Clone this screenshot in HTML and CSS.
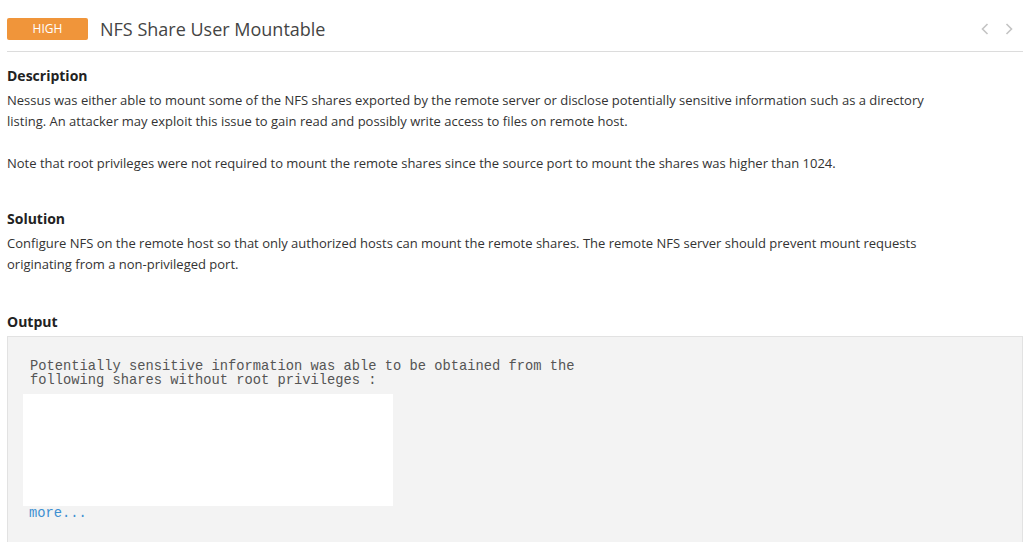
FILE: index.html
```html
<!DOCTYPE html>
<html>
<head>
<meta charset="utf-8">
<link rel="stylesheet" href="styles.css">
</head>
<body>
<div class="page">
  <header class="header">
    <span class="badge">HIGH</span>
    <h1 class="title">NFS Share User Mountable</h1>
    <div class="nav">
      <svg class="chev" width="10" height="14" viewBox="0 0 10 14"><path d="M7.5 2 L2.5 7 L7.5 12" fill="none" stroke="#c4c4c4" stroke-width="1.6"/></svg>
      <svg class="chev" width="10" height="14" viewBox="0 0 10 14"><path d="M2.5 2 L7.5 7 L2.5 12" fill="none" stroke="#c4c4c4" stroke-width="1.6"/></svg>
    </div>
  </header>

  <section class="section">
    <h2 class="heading">Description</h2>
    <p class="text">Nessus was either able to mount some of the NFS shares exported by the remote server or disclose potentially sensitive information such as a directory listing. An attacker may exploit this issue to gain read and possibly write access to files on remote host.</p>
    <p class="text gap">Note that root privileges were not required to mount the remote shares since the source port to mount the shares was higher than 1024.</p>
  </section>

  <section class="section">
    <h2 class="heading">Solution</h2>
    <p class="text">Configure NFS on the remote host so that only authorized hosts can mount the remote shares. The remote NFS server should prevent mount requests originating from a non-privileged port.</p>
  </section>

  <section class="section">
    <h2 class="heading">Output</h2>
    <div class="output">
      <pre class="mono">Potentially sensitive information was able to be obtained from the
following shares without root privileges :</pre>
      <div class="redacted"></div>
      <a class="more" href="#">more...</a>
    </div>
  </section>
</div>
</body>
</html>
```

FILE: styles.css
```css
* { box-sizing: border-box; }
html, body { margin: 0; padding: 0; background: #fff; }
body { font-family: "Open Sans", "Noto Sans", sans-serif; color: #333; }
.page { padding: 0 1px 0 7px; overflow: hidden; height: 542px; }
.header {
  display: flex; align-items: center;
  height: 52px; padding-top: 6px;
  border-bottom: 1px solid #dcdcdc;
}
.badge {
  width: 81px; height: 22px; line-height: 22px;
  background: #f0953a; color: #fff; border-radius: 2px;
  font-size: 12px; text-align: center;
}
.title {
  margin: 0 0 0 12px; font-weight: 400; font-size: 18px; color: #444;
  flex: 1;
}
.nav { display: flex; gap: 14px; padding-right: 9px; }
.chev { display: block; }
.heading {
  margin: 0 0 2px; font-size: 14px; font-weight: 700; color: #222;
  line-height: 24px;
}
.text { margin: 0; font-size: 13px; line-height: 21px; max-width: 930px; }
.text.gap { margin-top: 21px; }
.section:nth-of-type(1) { padding-top: 12px; }
.section:nth-of-type(2) { padding-top: 33px; }
.section:nth-of-type(3) { padding-top: 35px; }
.output {
  margin-top: 1px; background: #f3f3f3;
  border-top: 1px solid #e2e2e2; border-left: 1px solid #e2e2e2; border-right: 1px solid #e2e2e2;
  padding: 23px 0 30px 15px; height: 220px;
}
.mono {
  margin: 0 0 0 7px; font-family: "Liberation Mono", monospace; font-size: 13.75px; line-height: 14px; color: #555;
}
.redacted { margin-top: 6px; width: 370px; height: 112px; background: #fff; }
.more {
  display: block; margin: 0 0 0 6px; font-family: "Liberation Mono", monospace; font-size: 13.75px;
  color: #3d8fd1; text-decoration: none;
}
```
